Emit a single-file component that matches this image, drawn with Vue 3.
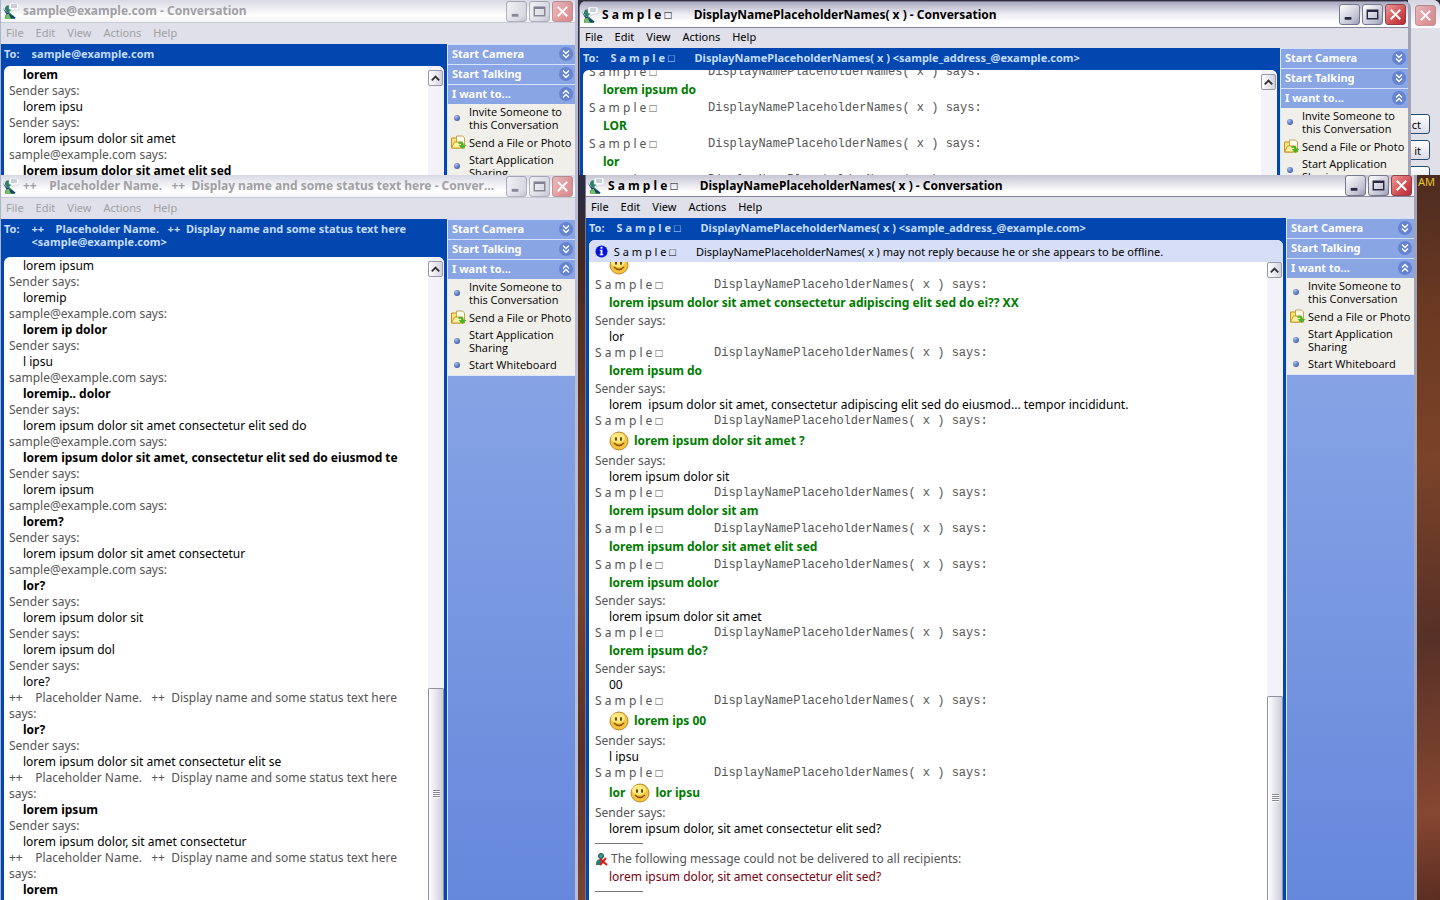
<script setup>
const nick = 'S a m p l e □'
const display = 'DisplayNamePlaceholderNames( x )'
const wide = `${nick}       ${display}`
const status = '++    Placeholder Name.   ++  Display name and some status text here'
const mail = 'sample@example.com'

const me = { k: 'says', t: 'Sender says:' }
const them = { k: 'says', t: `${mail} says:` }
const alt = { k: 'says', t: `${status}` }
const altEnd = { k: 'says', t: 'says:' }
const mono = { k: 'mono' }
const msg = (t) => ({ k: 'msg', t })
const bold = (t) => ({ k: 'bold', t })
const green = (t) => ({ k: 'green', t })
const smile = (t, pre = '') => ({ k: 'smile', t, pre })

const windows = [
  {
    id: 'a', inactive: true, title: `${mail} - Conversation`, to: mail,
    rows: [bold('lorem'), me, msg('lorem ipsu'), me, msg('lorem ipsum dolor sit amet'), them, bold('lorem ipsum dolor sit amet elit sed')],
  },
  {
    id: 'b', title: `${wide} - Conversation`, to: `${wide} <sample_address_@example.com>`,
    rows: [mono, green('lorem ipsum do'), mono, green('LOR'), mono, green('lor'), mono],
  },
  {
    id: 'c', inactive: true, thumb: true, title: `${status} - Conversation`, to: status, to2: `<${mail}>`,
    rows: [
      msg('lorem ipsum'), me, msg('loremip'), them, bold('lorem ip dolor'), me, msg('l ipsu'), them,
      bold('loremip.. dolor'), me, msg('lorem ipsum dolor sit amet consectetur elit sed do'), them,
      bold('lorem ipsum dolor sit amet, consectetur elit sed do eiusmod te'), me, msg('lorem ipsum'), them,
      bold('lorem?'), me, msg('lorem ipsum dolor sit amet consectetur'), them, bold('lor?'), me,
      msg('lorem ipsum dolor sit'), me, msg('lorem ipsum dol'), me, msg('lore?'), alt, altEnd,
      bold('lor?'), me, msg('lorem ipsum dolor sit amet consectetur elit se'), alt, altEnd,
      bold('lorem ipsum'), me, msg('lorem ipsum dolor, sit amet consectetur'), alt, altEnd, bold('lorem'),
    ],
  },
  {
    id: 'd', thumb: true, title: `${wide} - Conversation`, to: `${wide} <sample_address_@example.com>`,
    notice: `${wide} may not reply because he or she appears to be offline.`,
    rows: [
      smile(''), mono, green('lorem ipsum dolor sit amet consectetur adipiscing elit sed do ei?? XX'), me, msg('lor'), mono,
      green('lorem ipsum do'), me, msg('lorem  ipsum dolor sit amet, consectetur adipiscing elit sed do eiusmod... tempor incididunt.'), mono,
      smile('lorem ipsum dolor sit amet ?'), me, msg('lorem ipsum dolor sit'), mono, green('lorem ipsum dolor sit am'), mono,
      green('lorem ipsum dolor sit amet elit sed'), mono, green('lorem ipsum dolor'), me, msg('lorem ipsum dolor sit amet'), mono,
      green('lorem ipsum do?'), me, msg('00'), mono, smile('lorem ips 00'), me, msg('l ipsu'), mono,
      smile('lor ipsu', 'lor'), me, msg('lorem ipsum dolor, sit amet consectetur elit sed?'), { k: 'line' },
      { k: 'error', t: 'The following message could not be delivered to all recipients:' },
      { k: 'failed', t: 'lorem ipsum dolor, sit amet consectetur elit sed?' }, { k: 'line last' },
    ],
  },
]
const menus = ['File', 'Edit', 'View', 'Actions', 'Help']
const panels = ['Start Camera', 'Start Talking', 'I want to...']
const tasks = ['Invite Someone to this Conversation', 'Send a File or Photo', 'Start Application Sharing', 'Start Whiteboard']
</script>

<template>
  <main class="desktop">
    <span class="clock">AM</span>
    <section class="dialog">
      <div class="dialog-bar">
        <button class="ctl close" aria-label="Close"><svg viewBox="0 0 20 20"><path d="M5 5l10 10M15 5L5 15" /></svg></button>
      </div>
      <button class="push first">ct</button>
      <button class="push">it</button>
      <button class="push" aria-label="More"></button>
    </section>

    <section v-for="w in windows" :key="w.id" class="window" :class="[w.id, { inactive: w.inactive }]">
      <header class="title">
        <svg class="logo" viewBox="0 0 16 16">
          <path d="M3 3q3-2 5 1 1 3-2 5l6 5v2H2q-1-4 3-6Q0 7 3 3z" fill="#2e8068" />
          <path d="M0 4q2 5 5 6l8 5H8Q1 10 0 4z" fill="#173d70" />
          <path d="M2 16q0-5 4-5l2 5z" fill="#78bd65" />
          <path d="M7 0h8l1 1v5l-1 1h-4L9 9V7L6 6V1z" fill="#fff" stroke="#b8bdca" stroke-width=".5" />
          <path d="M8 2h6M8 4h6" stroke="#7c8998" stroke-width=".8" />
        </svg>
        <h1>{{ w.title }}</h1>
        <button class="ctl" aria-label="Minimize"><svg viewBox="0 0 20 20"><path d="M5 14h7" /></svg></button>
        <button class="ctl" aria-label="Maximize"><svg viewBox="0 0 20 20"><path d="M4.500 5.500h11v9h-11zM4 6.500h12" class="thin" /></svg></button>
        <button class="ctl close" aria-label="Close"><svg viewBox="0 0 20 20"><path d="M5 5l10 10M15 5L5 15" /></svg></button>
      </header>
      <nav class="menu"><button v-for="m in menus" :key="m">{{ m }}</button></nav>
      <div class="body">
        <div class="chat">
          <div class="to"><span>To:</span><p>{{ w.to }}<template v-if="w.to2"><br>{{ w.to2 }}</template></p></div>
          <div class="sheet">
            <div v-if="w.notice" class="notice">
              <svg viewBox="0 0 14 14"><circle cx="7" cy="7" r="6.500" fill="#0714d4" /><path d="M6 2h2v2H6zM5 5h3v5h1v1H5v-1h1V6H5z" fill="#fff" /></svg>
              {{ w.notice }}
            </div>
            <div class="scroller">
              <div class="log">
                <div v-for="(r, i) in w.rows" :key="i" class="row" :class="r.k">
                  <template v-if="r.k === 'mono'"><span class="nick">{{ nick }}</span><span>{{ display }} says:</span></template>
                  <template v-else-if="r.k === 'smile'">
                    <span v-if="r.pre">{{ r.pre }}</span>
                    <svg class="face" viewBox="0 0 20 20">
                      <circle cx="10" cy="10" r="9" fill="#f4c43a" stroke="#b98a32" />
                      <ellipse cx="9" cy="7" rx="7" ry="5" fill="#ffe982" />
                      <ellipse cx="7" cy="8" rx="1" ry="2" fill="#583809" /><ellipse cx="12" cy="8" rx="1" ry="2" fill="#583809" />
                      <path d="M5 12q5 5 10 0" fill="none" stroke="#8a4c0b" stroke-width="1.300" />
                    </svg>
                    <span>{{ r.t }}</span>
                  </template>
                  <template v-else-if="r.k === 'error'">
                    <svg class="fail" viewBox="0 0 13 13"><circle cx="6" cy="3" r="2.500" fill="#3b9d91" stroke="#164944" /><path d="M1 11q0-5 5-5l2 1-2 5H1z" fill="#267f77" /><path d="M5 6l7 6M11 5l-6 7" stroke="#e21919" stroke-width="2" /></svg>{{ r.t }}
                  </template>
                  <hr v-else-if="r.k.startsWith('line')">
                  <template v-else>{{ r.t }}</template>
                </div>
              </div>
              <div class="track">
                <button class="up" aria-label="Scroll up"><svg viewBox="0 0 14 14"><path d="M3 9l4-4 4 4" /></svg></button>
                <div v-if="w.thumb" class="thumb"><i></i></div>
              </div>
            </div>
          </div>
        </div>
        <aside class="side">
          <button v-for="(p, i) in panels" :key="p" class="panel">{{ p }}
            <svg viewBox="0 0 14 14"><circle cx="7" cy="7" r="7" fill="#6583cf" /><path :d="i === 2 ? 'M4 6.500l3-3 3 3M4 10.500l3-3 3 3' : 'M4 3.500l3 3 3-3M4 7.500l3 3 3-3'" /></svg>
          </button>
          <div class="tasks">
            <a v-for="(t, i) in tasks" :key="t" href="#">
              <svg v-if="i === 1" class="folder" viewBox="0 0 16 14"><path d="M1 3h5l1 2h7v8H1z" fill="#ffe574" stroke="#bd9321" /><path d="M6 1h6l2 2v6H6z" fill="#fffbe6" stroke="#c2a45c" /><path d="M1 13l3-6h8l-2 6z" fill="#fff1a0" stroke="#c59a2c" /><path d="M8 7q5-1 5 3h3l-4 4-4-4h3q0-2-3-1z" fill="#48b52b" /></svg>
              <i v-else class="dot"></i><span>{{ t }}</span>
            </a>
          </div>
        </aside>
      </div>
    </section>
  </main>
</template>

<style>
body { margin: 0; overflow: hidden; }
</style>

<style scoped>
* { box-sizing: border-box; }
button { font: inherit; color: inherit; border: 0; padding: 0; background: none; }
.desktop { position: relative; height: 100vh; min-height: 600px; overflow: hidden; font: 11px/13px "Noto Sans", sans-serif; color: #000;
  background: linear-gradient(172deg, #39333f 0, #2d2b40 25%, #44281f 31%, #6b3922 46%, #7b4329 60%, #573027 76%, #864731 92%, #5b2d22 100%); }
.clock { position: absolute; right: 5px; top: 175px; color: #e6c82b; }
.window { position: absolute; display: flex; flex-direction: column; overflow: hidden; background: #dfe0e9; border-right: 3px solid #b9bdd2; border-left: 1px solid #aeb3c9; }
.a { left: 0; right: 862px; top: 0; height: 175px; }
.b { left: 579px; right: 29px; top: 1px; height: 174px; border-radius: 7px 7px 0 0; }
.c { left: 0; right: 862px; top: 175px; bottom: 0; }
.d { left: 585px; right: 23px; top: 175px; bottom: 0; }
.b, .d { border-left-color: #74768d; border-right-color: #a2a2b7; }
.title { display: flex; align-items: center; gap: 2px; flex: none; height: 23px; padding: 0 2px 0 2px; background: linear-gradient(#d9d9e4, #fff 70%, #f4f4f8); border-bottom: 1px solid #c8cad5; }
.b .title { height: 27px; border-top: 1px solid #77778b; background: linear-gradient(#a9a9bf, #e9e9f0 45%, #fff 80%); border-bottom-color: #85859b; }
.d .title { height: 22px; background: linear-gradient(#c5c5d4, #fff 80%); border-bottom-color: #85859b; }
.logo { width: 16px; height: 16px; flex: none; }
.title h1 { flex: 1; margin: 0 8px 0 2px; font: bold 12px/18px "Noto Sans", sans-serif; white-space: pre; overflow: hidden; text-overflow: ellipsis; }
.inactive .title h1, .inactive .menu { color: #a0a0a5; }
.ctl { width: 21px; height: 21px; flex: none; border: 1px solid #77778e; border-radius: 3px; background: linear-gradient(135deg, #fff, #bfc0d0 75%, #9798ae); }
.ctl svg { display: block; width: 19px; height: 19px; fill: none; stroke: #292942; stroke-width: 3; }
.ctl .thin { stroke-width: 1.5; }
.close { background: linear-gradient(135deg, #ec9a96, #cb4147 70%, #b52f38); border-color: #934049; }
.close svg { stroke: #fff; stroke-width: 2; }
.inactive .ctl, .dialog .ctl { opacity: .55; }
.menu { display: flex; gap: 12px; align-items: center; flex: none; height: 21px; padding: 0 0 2px 5px; }
.b .menu { height: 20px; padding-bottom: 3px; }
.body { display: flex; flex: 1; min-height: 0; }
.chat { display: flex; flex-direction: column; flex: 1; min-width: 0; background: #0247b0; padding: 0 3px; }
.to { display: flex; flex: none; gap: 12px; min-height: 22px; padding: 3px 0; color: #c5dcff; font-weight: bold; white-space: pre; }
.c .to { min-height: 38px; }
.to p { margin: 0; overflow: hidden; }
.sheet { display: flex; flex-direction: column; flex: 1; min-height: 0; overflow: hidden; border-radius: 6px 6px 0 0; background: #fff; }
.notice { display: flex; align-items: center; gap: 3px; flex: none; height: 22px; padding-left: 6px; background: #d6dff7; white-space: pre; }
.notice svg { width: 13px; height: 13px; flex: none; }
.scroller { display: flex; flex: 1; min-height: 0; }
.log { flex: 1; min-width: 0; overflow: hidden; padding: 1px 0 0 6px; font-size: 12px; line-height: 16px; }
.inactive .log { padding-left: 5px; }
.row { display: flex; flex: none; align-items: center; height: 16px; white-space: pre; }
.says, .mono, .error { color: #555; }
.msg, .bold, .green, .smile, .failed { padding-left: 14px; }
.bold { font-weight: bold; }
.green, .smile { height: 20px; color: #007b00; font-weight: bold; }
.smile { height: 24px; gap: 5px; }
.mono { font-family: "Liberation Mono", monospace; }
.nick { width: 119px; font-family: "Noto Sans", sans-serif; }
.failed { color: #7a0010; }
.face { width: 20px; height: 20px; flex: none; }
.fail { width: 13px; height: 13px; margin-right: 3px; }
.row hr { width: 48px; margin: 0; border: 0; border-top: 1px solid #777; }
.row.line { height: 12px; align-items: center; }
.row.error { height: 20px; }
.d .row:first-child { margin-top: -10px; }
.b .row:first-child { margin-top: -7px; }
.track { display: flex; flex-direction: column; flex: none; width: 16px; background: #f2f2f8; }
.up { width: 15px; height: 16px; margin-top: 4px; border: 1px solid #9899aa; border-radius: 2px; background: linear-gradient(90deg, #fff, #d2d2df); }
.d .up { margin-top: 0; }
.up svg { display: block; width: 13px; height: 13px; fill: none; stroke: #333; stroke-width: 2; }
.thumb { display: flex; align-items: center; justify-content: center; height: 33%; margin-top: auto; border: 1px solid #92929f; border-bottom: 0; border-radius: 2px 2px 0 0; background: linear-gradient(90deg, #fff, #ccccda); }
.d .thumb { height: 32%; }
.thumb i { width: 7px; height: 8px; background: repeating-linear-gradient(#85859b 0 1px, #fff 1px 2px); }
.side { width: 128px; flex: none; border-left: 1px solid #dce5fc; background: linear-gradient(#90abe8, #6688dc); }
.panel { display: flex; align-items: center; justify-content: space-between; width: 100%; height: 20px; padding: 0 2px 2px 4px; color: #fff; background: #89a5e4; border-top: 1px solid #d5e0fa; font: bold 11px/14px "Noto Sans", sans-serif; }
.panel svg { width: 14px; height: 14px; fill: none; }
.panel path { stroke: #fff; stroke-width: 1.300; }
.tasks { display: flex; flex-direction: column; gap: 4px; padding: 1px 0 4px 2px; background: #f1efe9; border-bottom: 1px solid #dce5fc; font-family: "Open Sans", "Noto Sans", sans-serif; }
.tasks a { display: flex; align-items: center; gap: 2px; color: #000; text-decoration: none; }
.tasks span { width: 105px; white-space: normal; }
.dot { width: 6px; height: 6px; margin: 0 7px 0 4px; flex: none; border-radius: 50%; background: radial-gradient(circle at 35% 30%, #a9bcec, #4564ad 70%); }
.folder { width: 17px; height: 14px; flex: none; }
.dialog { position: absolute; right: 0; top: 0; width: 32px; height: 175px; overflow: hidden; display: flex; flex-direction: column; gap: 6px; align-items: flex-start; background: #e0e0e9; border-radius: 0 7px 0 0; }
.dialog-bar { align-self: stretch; display: flex; justify-content: flex-end; flex: none; height: 28px; padding: 5px 4px 0 0; background: linear-gradient(#d5d5e1, #fff); }
.push { width: 22px; height: 20px; flex: none; text-align: right; padding-right: 8px; border: 1px solid #244d70; border-radius: 0 3px 3px 0; background: linear-gradient(#fff, #dcdce8); }
.first { margin-top: 80px; }
</style>
